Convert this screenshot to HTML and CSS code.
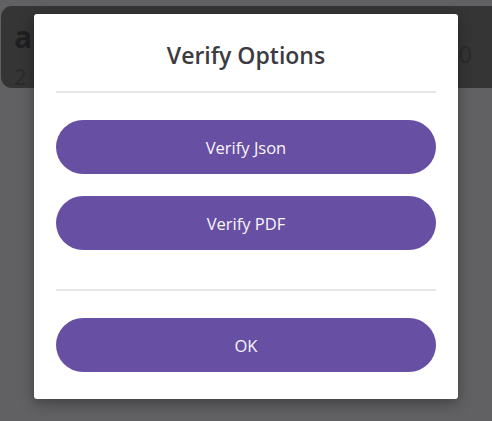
FILE: index.html
```html
<!DOCTYPE html>
<html>
<head>
<meta charset="utf-8">
<link rel="stylesheet" href="styles.css">
</head>
<body>
<div class="page">
  <div class="card">
    <div class="card-main">
      <div class="card-title">a</div>
      <div class="card-sub">2</div>
    </div>
    <div class="card-num">0</div>
  </div>
</div>
<div class="overlay">
  <div class="modal">
    <div class="modal-title">Verify Options</div>
    <div class="divider"></div>
    <div class="options">
      <button class="btn">Verify Json</button>
      <button class="btn">Verify PDF</button>
    </div>
    <div class="divider"></div>
    <div class="footer">
      <button class="btn">OK</button>
    </div>
  </div>
</div>
</body>
</html>
```
FILE: styles.css
```css
html, body {
  margin: 0;
  padding: 0;
  width: 492px;
  height: 421px;
  overflow: hidden;
}
body {
  background: #616062;
  font-family: "Open Sans", "Liberation Sans", sans-serif;
  position: relative;
}
.page {
  padding-top: 6px;
  padding-left: 1px;
}
.card {
  height: 82px;
  margin-right: -20px;
  background: #363536;
  border-radius: 11px;
  display: flex;
  justify-content: space-between;
  box-sizing: border-box;
  padding: 0 40px 0 13px;
}
.card-main {
  display: flex;
  flex-direction: column;
}
.card-title {
  font-size: 30px;
  font-weight: 700;
  color: #1f1e20;
  line-height: 30px;
  margin-top: 16px;
}
.card-sub {
  font-size: 22px;
  color: #2a292b;
  line-height: 24px;
  margin-top: 12px;
}
.card-num {
  font-size: 23px;
  color: #2a292b;
  line-height: 24px;
  margin-top: 36px;
}
.overlay {
  position: absolute;
  inset: 0;
  display: flex;
  justify-content: center;
  align-items: flex-start;
  padding-top: 14px;
}
.modal {
  width: 424px;
  box-sizing: border-box;
  background: #ffffff;
  border-radius: 3px;
  box-shadow: 0 4px 14px rgba(0, 0, 0, 0.35);
  padding: 0 22px 27px;
  display: flex;
  flex-direction: column;
}
.modal-title {
  padding: 26px 0 21px;
  line-height: 30px;
  text-align: center;
  font-size: 23px;
  font-weight: 600;
  color: #3c3b40;
}
.divider {
  height: 2px;
  background: #e6e6e6;
}
.options {
  display: flex;
  flex-direction: column;
  gap: 22px;
  padding: 27px 0 39px;
}
.footer {
  padding-top: 27px;
  display: flex;
  flex-direction: column;
}
.btn {
  height: 54px;
  border: none;
  border-radius: 27px;
  background: #6750a3;
  color: #f8f6fb;
  font-family: "Open Sans", "Liberation Sans", sans-serif;
  font-size: 16.5px;
  padding: 0;
}
```
